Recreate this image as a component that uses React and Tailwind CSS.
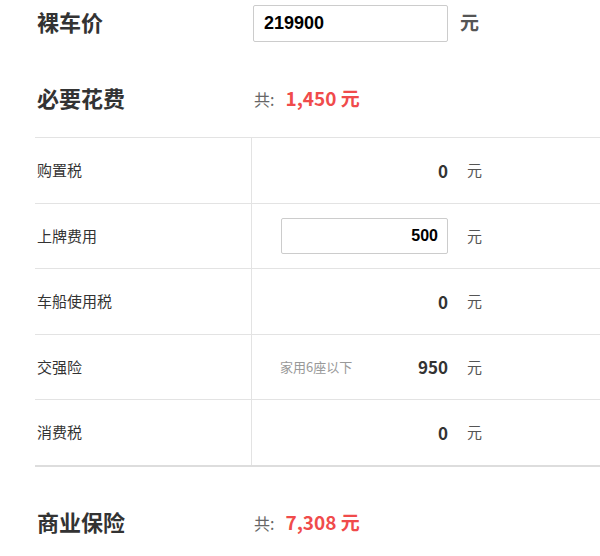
import React from 'react';

const cjk = { fontFamily: '"Microsoft YaHei", "Noto Sans CJK SC", "Noto Sans", sans-serif' };

const Unit = () => <span className="ml-[19px] text-[15px] text-[#555]">元</span>;

const Heading = ({ title, total }) => (
  <div className="flex h-[47px] items-center">
    <div className="w-[217px] pb-[8px] text-[22px] leading-[22px] font-bold text-[#333]">{title}</div>
    <div className="flex items-baseline pb-[5px]">
      <span className="text-[16px] text-[#666]">共:</span>
      <span className="ml-[11px] text-[19px] font-bold text-[#f04b4b]">{total} 元</span>
    </div>
  </div>
);

const App = () => {
  const rows = [
    { id: 1, label: '购置税', value: '0', h: 'h-[66px]' },
    { id: 2, label: '上牌费用', value: '500', input: true, h: 'h-[65px]' },
    { id: 3, label: '车船使用税', value: '0', h: 'h-[66px]' },
    { id: 4, label: '交强险', value: '950', note: '家用6座以下', h: 'h-[65px]' },
    { id: 5, label: '消费税', value: '0', h: 'h-[66px]' },
  ];

  return (
    <div className="min-h-[556px] overflow-hidden bg-white pl-[35px]" style={cjk}>
      {/* 裸车价 */}
      <div className="flex h-[47px] items-center">
        <div className="w-[218px] pb-[6px] pl-[2px] text-[22px] leading-[22px] font-bold text-[#333]">裸车价</div>
        <input
          readOnly
          value="219900"
          className="h-[37px] w-[195px] rounded-[2px] border border-[#ccc] px-[10px] text-[18px] font-bold text-black outline-none"
          style={{ fontFamily: '"Liberation Sans", Arial, sans-serif' }}
        />
        <span className="ml-[12px] pb-[2px] text-[19px] font-bold text-[#555]">元</span>
      </div>

      <div className="mt-[30px] pl-[2px]">
        <Heading title="必要花费" total="1,450" />
      </div>

      {/* 费用明细 */}
      <div className="mt-[13px] w-[600px] border-b-2 border-[#ddd]">
        {rows.map((row) => (
          <div key={row.id} className={`flex border-t border-[#e3e3e3] ${row.h}`}>
            <div className="flex w-[217px] items-center border-r border-[#e3e3e3] pl-[2px] text-[15px] text-[#333]">
              {row.label}
            </div>
            <div className="flex w-[196px] items-center justify-end">
              {row.note && (
                <span className="mr-auto pl-[28px] text-[13px] text-[#999]">{row.note}</span>
              )}
              {row.input ? (
                <input
                  readOnly
                  value={row.value}
                  className="h-[36px] w-[167px] rounded-[2px] border border-[#ccc] pr-[9px] text-right text-[16px] font-bold text-black outline-none"
                  style={{ fontFamily: '"Liberation Sans", Arial, sans-serif' }}
                />
              ) : (
                <span className="text-[17px] font-bold text-[#333]">{row.value}</span>
              )}
            </div>
            <div className="flex items-center">
              <Unit />
            </div>
          </div>
        ))}
      </div>

      <div className="mt-[34px] pl-[2px]">
        <Heading title="商业保险" total="7,308" />
      </div>
    </div>
  );
};

export default App;
